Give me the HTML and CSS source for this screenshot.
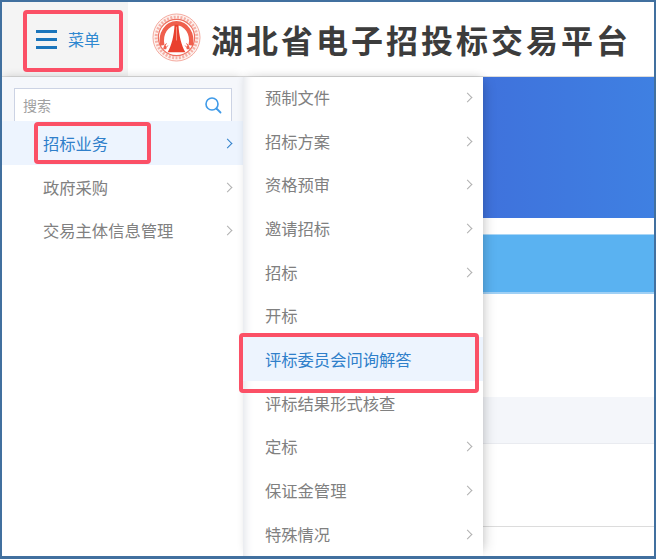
FILE: index.html
```html
<!DOCTYPE html>
<html lang="zh-CN">
<head>
  <meta charset="UTF-8">
  <title>湖北省电子招投标交易平台</title>
  <link rel="stylesheet" href="styles.css">
</head>
<body>
  <div class="frame">
    <header class="header">
      <div class="menu-btn">
        <span class="burger"><i></i><i></i><i></i></span>
        <span class="menu-label">菜单</span>
        <span class="mark mark-menu"></span>
      </div>
      <svg class="logo" viewBox="0 0 50 50" width="49" height="49">
        <circle cx="25" cy="25" r="24" fill="#fdf1ee" stroke="#f4a99e" stroke-width="1"/>
        <circle cx="25" cy="25" r="20.800" fill="none" stroke="#f5b0a6" stroke-width="3" stroke-dasharray="2 1.500"/>
        <circle cx="25" cy="25" r="18.500" fill="#fff" stroke="#ee6f5f" stroke-width="1.200"/>
        <path d="M10.500 33 C8 21 15 10.500 25 10.500 C35 10.500 42 21 39.500 33" fill="none" stroke="#ef5f4d" stroke-width="4.500"/>
        <path d="M13 37 C13 34 14 33 16 32 M37 37 C37 34 36 33 34 32" fill="none" stroke="#ef5f4d" stroke-width="3"/>
        <path d="M23 12 L27 12 C27.500 23 30 33 34 40 L16 40 C20 33 22.500 23 23 12 Z" fill="#e9402e"/>
        <path d="M21 14 C20 23 17.500 30 14.500 34 M29 14 C30 23 32.500 30 35.500 34" fill="none" stroke="#fff" stroke-width="1.800"/>
        <path d="M25 14 L25 28" stroke="#f7a699" stroke-width="0.800"/>
      </svg>
      <h1 class="title">湖北省电子招投标交易平台</h1>
    </header>

    <div class="body">
      <nav class="side">
        <div class="search-wrap">
          <div class="search">
            <span class="search-text">搜索</span>
            <svg class="search-icon" viewBox="0 0 18 18" width="18" height="18">
              <circle cx="8" cy="8" r="6" fill="none" stroke="#3f9ae8" stroke-width="1.600"/>
              <path d="M12.500 12.500 L16.500 16.500" stroke="#3f9ae8" stroke-width="1.800" stroke-linecap="round"/>
            </svg>
          </div>
        </div>
        <ul class="list">
          <li class="item active">
            <span class="label-mark">招标业务<span class="mark mark-item"></span></span>
            <span class="arrow"></span>
          </li>
          <li class="item">政府采购<span class="arrow"></span></li>
          <li class="item">交易主体信息管理<span class="arrow"></span></li>
        </ul>
      </nav>

      <nav class="sub">
        <ul class="list">
          <li class="item">预制文件<span class="arrow"></span></li>
          <li class="item">招标方案<span class="arrow"></span></li>
          <li class="item">资格预审<span class="arrow"></span></li>
          <li class="item">邀请招标<span class="arrow"></span></li>
          <li class="item">招标<span class="arrow"></span></li>
          <li class="item">开标</li>
          <li class="item active">评标委员会问询解答<span class="mark mark-sub"></span></li>
          <li class="item">评标结果形式核查</li>
          <li class="item">定标<span class="arrow"></span></li>
          <li class="item">保证金管理<span class="arrow"></span></li>
          <li class="item">特殊情况<span class="arrow"></span></li>
        </ul>
      </nav>

      <main class="content">
        <div class="banner"></div>
        <div class="strip"></div>
        <div class="blank"></div>
        <div class="thead"></div>
        <div class="rows"></div>
      </main>
    </div>
  </div>
</body>
</html>
```

FILE: styles.css
```css
* {
  box-sizing: border-box;
}
html, body {
  margin: 0;
  height: 100%;
}
body {
  font-family: "Noto Sans CJK SC", "Liberation Sans", sans-serif;
  background: #fff;
  overflow: hidden;
}
ul {
  list-style: none;
  margin: 0;
  padding: 0;
}
.frame {
  width: 656px;
  height: 559px;
  border: 2px solid #41709f;
  border-bottom-width: 3px;
  display: flex;
  flex-direction: column;
  overflow: hidden;
}

/* top bar */
.header {
  height: 75px;
  flex: none;
  display: flex;
  align-items: center;
  border-bottom: 1px solid #dcdcdc;
  background: #fff;
}
.menu-btn {
  position: relative;
  width: 126px;
  height: 100%;
  background: #f4f4f4;
  display: flex;
  align-items: center;
  padding-left: 34px;
  gap: 11px;
}
.burger {
  display: flex;
  flex-direction: column;
  gap: 5px;
  width: 21px;
}
.burger i {
  display: block;
  height: 3px;
  background: #1b75bb;
}
.menu-label {
  font-size: 16px;
  color: #2f88d0;
}
.logo {
  margin: 0 0 3px 24px;
  flex: none;
}
.title {
  margin: 0 0 0 10px;
  font-size: 32px;
  font-weight: 700;
  letter-spacing: 3px;
  color: #3c3c3c;
  white-space: nowrap;
}

/* red annotation boxes */
.mark {
  position: absolute;
  z-index: 2;
  border: 4px solid #fb5066;
  border-radius: 4px;
  pointer-events: none;
}
.mark-menu {
  left: 21px;
  top: 8px;
  width: 100px;
  height: 62px;
}
.mark-item {
  left: -9px;
  top: -9px;
  width: 117px;
  height: 42px;
}
.mark-sub {
  left: -4px;
  top: -4px;
  width: 240px;
  height: 60px;
}

/* menus */
.body {
  flex: 1;
  display: flex;
  min-height: 0;
}
.side {
  position: relative;
  z-index: 1;
  width: 241px;
  flex: none;
  background: #fff;
  box-shadow: 0 -3px 8px -2px rgba(0, 0, 0, 0.14);
}
.search-wrap {
  height: 44px;
  padding: 11px 11px 0 12px;
  background: #f5f7fb;
}
.search {
  height: 34px;
  background: #fff;
  border: 1px solid #ccd3e4;
  display: flex;
  align-items: center;
  justify-content: space-between;
  padding: 0 9px 0 8px;
}
.search-text {
  font-size: 14px;
  color: #a0a0a0;
}
.item {
  position: relative;
  height: 43.7px;
  display: flex;
  align-items: center;
  font-size: 16.3px;
  color: #808080;
  padding-left: 41px;
  white-space: nowrap;
}
.item.active {
  color: #2f7fca;
  background: #edf4fe;
}
.label-mark {
  position: relative;
}
.arrow {
  position: absolute;
  right: 12px;
  top: 50%;
  width: 7px;
  height: 7px;
  margin-top: -3px;
  border-top: 1px solid #b0b0b0;
  border-right: 1px solid #b0b0b0;
  transform: rotate(45deg);
}
.item.active .arrow {
  border-color: #2f7fca;
}
.sub {
  width: 240px;
  flex: none;
  background: #fff;
  box-shadow: inset 10px 0 10px -8px #dfe2e8, 8px 0 12px -6px rgba(0, 0, 0, 0.16), 0 -3px 8px -2px rgba(0, 0, 0, 0.14);
  position: relative;
  z-index: 1;
}
.sub .list {
  margin-top: -2px;
}
.sub .item {
  padding-left: 22px;
}

/* page behind the menus */
.content {
  flex: 1;
  display: flex;
  flex-direction: column;
  min-width: 0;
}
.banner {
  height: 141px;
  flex: none;
  background: linear-gradient(90deg, #3f72dc, #3f80e2);
}
.strip {
  height: 60px;
  margin-top: 16px;
  flex: none;
  background: #5ab2f1;
  border-top: 1px solid #a9d6f6;
  border-bottom: 2px solid #9fd0f5;
}
.blank {
  height: 103px;
  flex: none;
}
.thead {
  height: 47px;
  flex: none;
  background: #f4f6fa;
  border-bottom: 1px solid #e9ebf0;
}
.rows {
  height: 83px;
  flex: none;
  border-bottom: 1px solid #dcdcdc;
}
```
